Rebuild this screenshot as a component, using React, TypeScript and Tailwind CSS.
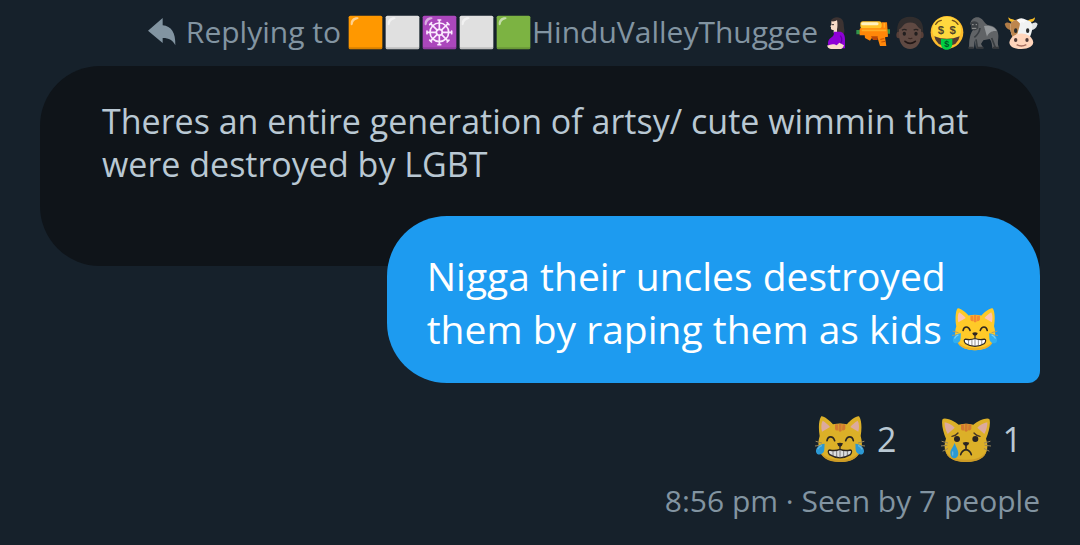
import type { ReactNode } from 'react';

interface Reaction {
  id: string;
  icon: ReactNode;
  count: number;
}

function ReplyArrow() {
  return (
    <svg viewBox="0 0 84 84" className="size-7 shrink-0" fill="#8294a1" aria-hidden="true">
      <path d="M0 38 44 0v22c26 2 39 22 38 60-8-15-18-22-38-22v15Z" />
    </svg>
  );
}

function Square({ color, children }: { color: string; children?: ReactNode }) {
  return (
    <svg viewBox="0 0 111 111" className="size-[37px] shrink-0" aria-hidden="true">
      <rect x="5" y="5" width="101" height="101" rx="5" fill={color} />
      <path d="M5 95v6q0 5 5 5h91q5 0 5-5v-6q0 5-5 5H10q-5 0-5-5Z" fill="#000" opacity=".15" />
      <path d="M11 31C10 18 18 10 31 10c5 0 5 5 0 6-9 2-12 6-14 15-1 4-6 4-6 0Z" fill="#fff" opacity=".55" />
      {children}
    </svg>
  );
}

function Wheel() {
  return (
    <g stroke="#fbe9ff" fill="none" strokeWidth="5" strokeLinecap="round">
      <circle cx="55" cy="55" r="28" />
      <circle cx="55" cy="55" r="9" />
      {[0, 45, 90, 135, 180, 225, 270, 315].map((a) => (
        <path key={a} d="M55 46V18M51 18h8" transform={`rotate(${a} 55 55)`} />
      ))}
    </g>
  );
}

function Pregnant() {
  return (
    <svg viewBox="0 0 111 111" className="size-[37px] shrink-0" aria-hidden="true">
      <path d="M38 20C44 7 66 6 73 17c6 9 3 19 6 30 1 9-1 13-6 16H56L47 28Z" fill="#3d3332" />
      <path d="M40 22c7 1 13 0 17-4 2 10 2 20 0 28v10H47v-8c-7 1-9-2-8-8l-2-3 3-5Z" fill="#f9dcc8" />
      <path d="M41 32h7" stroke="#3d3332" strokeWidth="3" />
      <path d="M48 53h20c9 3 13 10 13 24v26H38c-7-6-10-14-7-22 3-9 13-11 16-18Z" fill="#8e00d6" />
      <path d="M67 65c7 9 6 21-5 27" fill="none" stroke="#6400a5" strokeWidth="4" />
      <path d="m64 86 14 8c-2 6-5 10-9 11H39c-7-1-12-5-11-11 7-1 13-5 21-3l7 3Z" fill="#f9dcc8" />
    </svg>
  );
}

function WaterGun() {
  return (
    <svg viewBox="0 0 111 111" className="size-[37px] shrink-0" aria-hidden="true">
      <path d="M4 48h12v13H4ZM96 46h9v13h-9Z" fill="#31954b" />
      <path d="m14 45 8-8h53l5-12h16l3 43-9 2 4 26H75L68 73H50l-5 7-15-8-1-8H14Z" fill="#ff8709" />
      <rect x="16" y="22" width="64" height="21" rx="8" fill="#ffc52b" />
      <path d="M23 29h43" stroke="#fff3c0" strokeWidth="9" strokeLinecap="round" />
      <path d="M20 49h74M88 27v14" stroke="#ffad25" strokeWidth="5" />
      <path d="M48 67h20v11H54Z" fill="#b94708" />
      <path d="m76 76 12-2M79 84l12-2" stroke="#c65100" strokeWidth="3" />
    </svg>
  );
}

function Man() {
  return (
    <svg viewBox="0 0 111 111" className="size-[37px] shrink-0" aria-hidden="true">
      <path d="M16 63C12 26 25 8 54 8s43 18 39 55Z" fill="#312d2d" />
      <ellipse cx="20" cy="63" rx="7" ry="10" fill="#573f38" />
      <ellipse cx="88" cy="63" rx="7" ry="10" fill="#573f38" />
      <path d="M21 46c9-4 12-13 18-17q16-7 31 0c6 5 9 13 17 17v16c0 27-15 43-33 43S21 89 21 62Z" fill="#5f4942" />
      <path d="M30 49q7-6 14 0M65 49q7-6 14 0" fill="none" stroke="#282322" strokeWidth="4" />
      <ellipse cx="37" cy="59" rx="5" ry="6" fill="#211e1e" />
      <ellipse cx="72" cy="59" rx="5" ry="6" fill="#211e1e" />
      <path d="M49 72q6 4 12 0" fill="none" stroke="#3b2924" strokeWidth="4" />
      <path d="M39 82q15 12 31 0" fill="none" stroke="#221716" strokeWidth="5" strokeLinecap="round" />
    </svg>
  );
}

function MoneyFace() {
  return (
    <svg viewBox="0 0 111 111" className="size-[37px] shrink-0" aria-hidden="true">
      <circle cx="54" cy="55" r="49" fill="#fdbb2c" />
      <ellipse cx="53" cy="48" rx="43" ry="40" fill="#ffd83e" />
      <path d="M20 31q7-11 17-12M70 19q11 2 17 12" fill="none" stroke="#765018" strokeWidth="4" strokeLinecap="round" />
      <g fill="#50462b" fontFamily="Liberation Sans, sans-serif" fontSize="34" fontWeight="700" textAnchor="middle">
        <text x="36" y="60">$</text>
        <text x="71" y="60">$</text>
      </g>
      <path d="M16 67q38 15 76 0-5 29-38 29T16 67Z" fill="#513b31" />
      <path d="M36 74q18 4 34 0v15c0 24-34 24-34 0Z" fill="#00cf43" />
      <text x="53" y="100" fill="#005827" fontFamily="Liberation Sans, sans-serif" fontSize="27" fontWeight="700" textAnchor="middle">$</text>
    </svg>
  );
}

function Gorilla() {
  return (
    <svg viewBox="0 0 111 111" className="size-[37px] shrink-0" aria-hidden="true">
      <path d="M13 29c2-15 16-23 28-18 11 5 15 17 24 22 21 2 31 13 32 31 1 14-5 24 3 39H79c-1-10-1-20-8-28L52 79l-7 11 8 13H30l-4-24-2 24H8c3-11 0-20 4-34 2-9 5-16 9-21Z" fill="#606366" />
      <path d="M54 36c18-4 33 3 39 16-13-3-25 4-30 16Z" fill="#94989b" />
      <path d="M15 25q13-7 22 2v16q-9 11-22 3Z" fill="#3c4044" />
      <path d="M18 32h5m6 0h4M18 43h13" stroke="#9a9b9b" strokeWidth="3" />
      <path d="M42 42c-2 15-9 22-17 28M30 76l4 24M77 72l12 31" fill="none" stroke="#383d41" strokeWidth="5" />
      <path d="M8 98h15v6H8ZM31 98h21v6H31ZM80 98h19v6H80Z" fill="#36393c" />
    </svg>
  );
}

function Cow() {
  return (
    <svg viewBox="0 0 111 111" className="size-[37px] shrink-0" aria-hidden="true">
      <path d="M30 24q-14 0-14-14c8 8 18 4 22 13ZM82 24q14 0 14-14c-8 8-18 4-23 13Z" fill="#f9be25" />
      <path d="M28 33C18 22 8 25 5 30q5 19 23 18Z" fill="#b17c47" />
      <path d="M83 33c10-11 18-8 21-3q-5 19-23 18Z" fill="#e1e4e5" />
      <path d="M24 27C34 12 76 12 86 27c6 18-3 34-7 47H31c-6-14-13-29-7-47Z" fill="#f1f3f3" />
      <path d="M24 27c6-8 16-11 25-11 5 15-1 25-5 42L30 73c-5-13-12-28-6-46Z" fill="#bd864e" />
      <path d="M41 19q13-13 29 0l-8 8-5-4-5 6Z" fill="#fafafa" />
      <ellipse cx="38" cy="50" rx="5" ry="7" fill="#282b2c" />
      <ellipse cx="74" cy="50" rx="5" ry="7" fill="#282b2c" />
      <path d="M32 65q23-13 47 0c23 20 10 40-24 40S7 85 32 65Z" fill="#ffd5bb" />
      <ellipse cx="38" cy="78" rx="5" ry="6" fill="#4f3a36" />
      <ellipse cx="72" cy="78" rx="5" ry="6" fill="#4f3a36" />
      <path d="M41 92q14 8 29 0" fill="none" stroke="#a56d5d" strokeWidth="4" />
    </svg>
  );
}

function CatWhiskers() {
  return (
    <path d="m3 82 17 5M0 96l18-2M6 111l14-7M147 82l-17 5M150 96l-18-2M144 111l-14-7" fill="none" stroke="#b29a65" strokeWidth="3" strokeLinecap="round" />
  );
}

function CatStripes() {
  return (
    <path d="M60 31h9l1 18q-9 3-10-5ZM71 29h9v22q-5 4-9 0ZM82 31h9v13q-2 7-10 5Z" fill="#f58a32" />
  );
}

function JoyCat({ className }: { className: string }) {
  return (
    <svg viewBox="0 0 150 150" className={className} role="img" aria-label="Cat with tears of joy">
      <path d="M14 66C10 44 11 18 18 8c4-5 26 11 36 23q21-5 42 0C106 18 128 3 133 8c7 10 8 36 4 58 13 41-8 78-62 78S1 107 14 66Z" fill="#ffca28" />
      <path d="M12 103c9 25 31 34 63 34s54-9 63-34c-5 29-27 41-63 41s-58-12-63-41Z" fill="#eeb126" />
      <path d="M21 53C18 42 18 28 23 20c8 5 17 12 22 19ZM130 53c3-11 3-25-2-33-8 5-17 12-22 19Z" fill="#ffc3b1" />
      <CatStripes />
      <CatWhiskers />
      <path d="M36 80c3-15 18-15 23 0M92 80c5-15 20-15 23 0" fill="none" stroke="#302820" strokeWidth="5" strokeLinecap="round" />
      <path d="M66 88q9-4 18 0-2 9-9 10-7-1-9-10Z" fill="#2d2522" />
      <path d="M75 96v10M44 108q17 4 31-2 14 6 31 2c6 1 4 9 0 14q-31 19-62 0c-5-5-6-13 0-14Z" fill="#fff" stroke="#302820" strokeWidth="4" />
      <path d="M54 111v15M65 111v20M75 108v24M86 111v20M97 111v15" stroke="#54504b" strokeWidth="2" />
      <path d="M29 89c-15 1-27 12-26 24 2 12 20 11 24-1 2-7 1-15 2-23ZM121 89c15 1 27 12 26 24-2 12-20 11-24-1-2-7-1-15-2-23Z" fill="#31aef1" />
      <path d="M8 106q4-9 13-12M129 94q8 3 13 12" fill="none" stroke="#75d0fb" strokeWidth="4" />
    </svg>
  );
}

function CryingCat({ className }: { className: string }) {
  return (
    <svg viewBox="0 0 150 150" className={className} role="img" aria-label="Crying cat">
      <path d="M15 74C6 54 0 26 5 15c7-6 33 4 48 17q22-6 44 0c15-13 41-23 48-17 5 11-1 39-10 59 14 41-8 70-60 70S1 115 15 74Z" fill="#ffca28" />
      <path d="M13 108c9 22 30 29 62 29s53-7 62-29c-4 25-27 36-62 36s-58-11-62-36Z" fill="#eeb126" />
      <path d="M20 60C13 47 10 33 11 25c11 2 23 9 30 16ZM130 60c7-13 10-27 9-35-11 2-23 9-30 16Z" fill="#ffc3b1" />
      <CatStripes />
      <CatWhiskers />
      <path d="M33 67q12-2 18-10M99 57q6 8 18 10" fill="none" stroke="#4e3926" strokeWidth="4" strokeLinecap="round" />
      <ellipse cx="48" cy="75" rx="9" ry="9" fill="#2d2522" />
      <ellipse cx="103" cy="75" rx="9" ry="9" fill="#2d2522" />
      <path d="M65 86q10-4 20 0-2 9-10 10-8-1-10-10Z" fill="#2d2522" />
      <path d="M75 94v14M59 122q3-12 16-16 13 4 16 16" fill="none" stroke="#302820" strokeWidth="5" strokeLinecap="round" />
      <path d="M41 87c-5 13-13 20-13 31 0 20 24 20 24 0 0-10-7-18-11-31Z" fill="#31aef1" />
      <path d="M35 114v9" stroke="#75d0fb" strokeWidth="4" strokeLinecap="round" />
    </svg>
  );
}

const reactions: Reaction[] = [
  { id: 'joy', icon: <JoyCat className="size-[50px] opacity-85" />, count: 2 },
  { id: 'cry', icon: <CryingCat className="size-[50px] opacity-85" />, count: 1 },
];

export default function App() {
  return (
    <main className="min-h-screen bg-[#16212b] px-10 font-['Open_Sans','Noto_Sans',sans-serif]">
      <header className="flex items-center justify-end pt-3 pb-[14px] text-[30px] leading-10 whitespace-nowrap text-[#8294a1]">
        <ReplyArrow />
        <span className="ml-2.5">Replying to</span>
        <span className="ml-1.5 flex">
          <Square color="#ff9800" />
          <Square color="#e0e0e0" />
          <Square color="#ab47bc">
            <Wheel />
          </Square>
          <Square color="#e0e0e0" />
          <Square color="#7cb342" />
        </span>
        <span>HinduValleyThuggee</span>
        <span className="flex">
          <Pregnant />
          <WaterGun />
          <Man />
          <MoneyFace />
          <Gorilla />
          <Cow />
        </span>
      </header>

      <blockquote className="rounded-[60px] rounded-br-none bg-[#0f1419] px-[62px] pt-[34px] pb-20 text-[34px] leading-[43px] text-[#b9c8d3]">
        Theres an entire generation of artsy/ cute wimmin that
        <br />
        were destroyed by LGBT
      </blockquote>

      <p className="relative -mt-[50px] ml-auto w-fit rounded-[60px] rounded-br-xl bg-[#1d9bf0] pt-[33px] pr-[42px] pb-7 pl-10 text-[39px] leading-[53px] text-white">
        Nigga their uncles destroyed
        <br />
        them by raping them as kids <JoyCat className="inline size-[46px] align-[-8px]" />
      </p>

      <div className="mt-[31px] flex justify-end gap-11 pr-[18px] text-[34px] leading-[50px] text-[#b9c8d3]">
        {reactions.map((reaction) => (
          <button key={reaction.id} type="button" className="flex items-center gap-3">
            {reaction.icon}
            <span>{reaction.count}</span>
          </button>
        ))}
      </div>

      <footer className="pt-[17px] text-right text-[30px] leading-10 text-[#8294a1]">
        8:56 pm · Seen by 7 people
      </footer>
    </main>
  );
}
